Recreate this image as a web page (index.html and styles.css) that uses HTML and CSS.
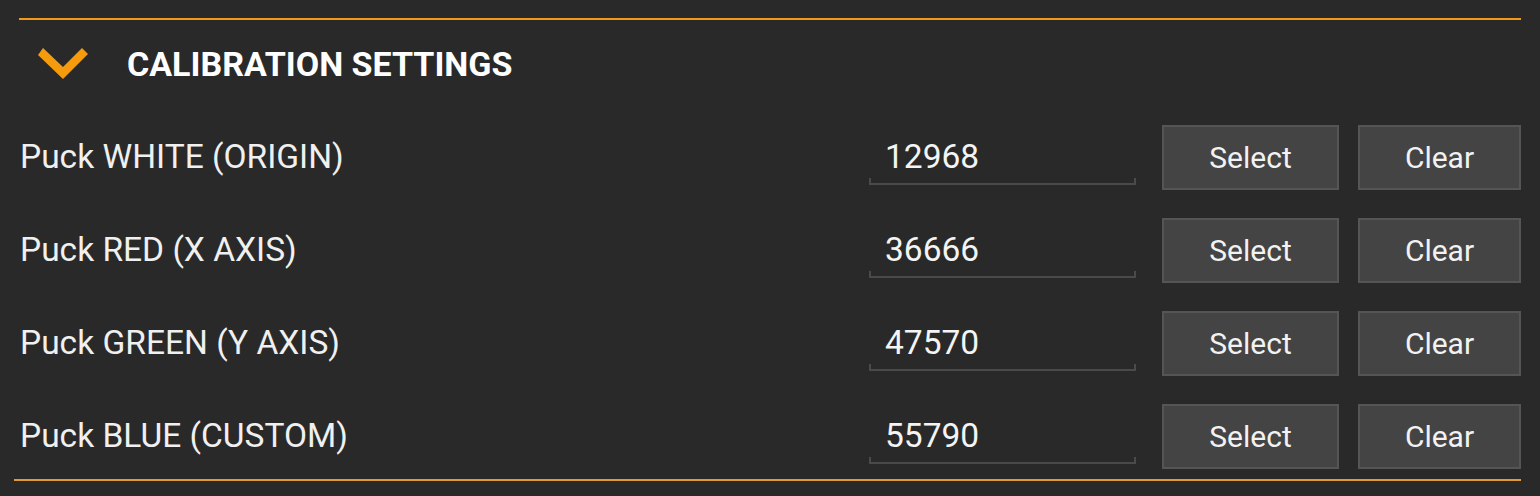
FILE: index.html
```html
<!DOCTYPE html>
<html>
<head>
<meta charset="utf-8">
<link rel="stylesheet" href="styles.css">
</head>
<body>
<section class="panel">
  <header class="panel-head">
    <svg class="chevron" width="50" height="31" viewBox="0 0 50 31"><polygon points="0,7 5,0 25,19 44,0 50,6 25,31" fill="#f59c0e"/></svg>
    <h2 class="title">CALIBRATION SETTINGS</h2>
  </header>
  <div class="rows">
    <div class="row">
      <span class="label">Puck WHITE (ORIGIN)</span>
      <div class="field"><span class="value">12968</span></div>
      <button class="btn btn-select">Select</button>
      <button class="btn btn-clear">Clear</button>
    </div>
    <div class="row">
      <span class="label">Puck RED (X AXIS)</span>
      <div class="field"><span class="value">36666</span></div>
      <button class="btn btn-select">Select</button>
      <button class="btn btn-clear">Clear</button>
    </div>
    <div class="row">
      <span class="label">Puck GREEN (Y AXIS)</span>
      <div class="field"><span class="value">47570</span></div>
      <button class="btn btn-select">Select</button>
      <button class="btn btn-clear">Clear</button>
    </div>
    <div class="row">
      <span class="label">Puck BLUE (CUSTOM)</span>
      <div class="field"><span class="value">55790</span></div>
      <button class="btn btn-select">Select</button>
      <button class="btn btn-clear">Clear</button>
    </div>
  </div>
  <div class="bottom-line"></div>
</section>
</body>
</html>
```

FILE: styles.css
```css
html, body {
  margin: 0;
  padding: 0;
  background: #292929;
  width: 1540px;
  height: 496px;
  overflow: hidden;
  font-family: Roboto, "Liberation Sans", sans-serif;
  color: #f2f2f2;
}

.panel {
  padding-top: 18px;
}

.panel-head {
  margin-left: 19px;
  width: 1502px;
  border-top: 2px solid #f09a16;
  height: 93px;
  display: flex;
  align-items: center;
  box-sizing: border-box;
}

.chevron {
  margin-left: 19px;
  margin-top: -5px;
  flex: none;
}

.title {
  margin: -3px 0 0 39px;
  font-size: 34px;
  font-weight: 700;
  color: #ffffff;
  letter-spacing: 0;
}

.rows {
  padding: 14px 0 10px 20px;
  display: flex;
  flex-direction: column;
  gap: 28px;
}

.row {
  height: 65px;
  display: flex;
  align-items: center;
}

.label {
  width: 849px;
  font-size: 33.5px;
  color: #f0f0f0;
  margin-top: -3px;
}

.field {
  width: 267px;
  height: 60px;
  box-sizing: border-box;
  border: 2px solid #4a4a4a;
  border-top: none;
  align-self: flex-start;
  position: relative;
  display: flex;
  align-items: flex-end;
  padding: 0 0 7px 14px;
}

.field::before {
  content: "";
  position: absolute;
  left: -2px;
  right: -2px;
  top: 0;
  bottom: 5px;
  background: #292929;
}

.value {
  position: relative;
  font-size: 33.5px;
  color: #f4f4f4;
}

.btn {
  height: 65px;
  box-sizing: border-box;
  background: #444444;
  border: 2px solid #555555;
  color: #f2f2f2;
  font-family: Roboto, "Liberation Sans", sans-serif;
  font-size: 30px;
  padding: 0;
  margin: 0;
}

.btn-select {
  width: 177px;
  margin-left: 26px;
}

.btn-clear {
  width: 163px;
  margin-left: 19px;
}

.bottom-line {
  margin-left: 14px;
  width: 1507px;
  height: 2px;
  background: #e39a36;
}
```
